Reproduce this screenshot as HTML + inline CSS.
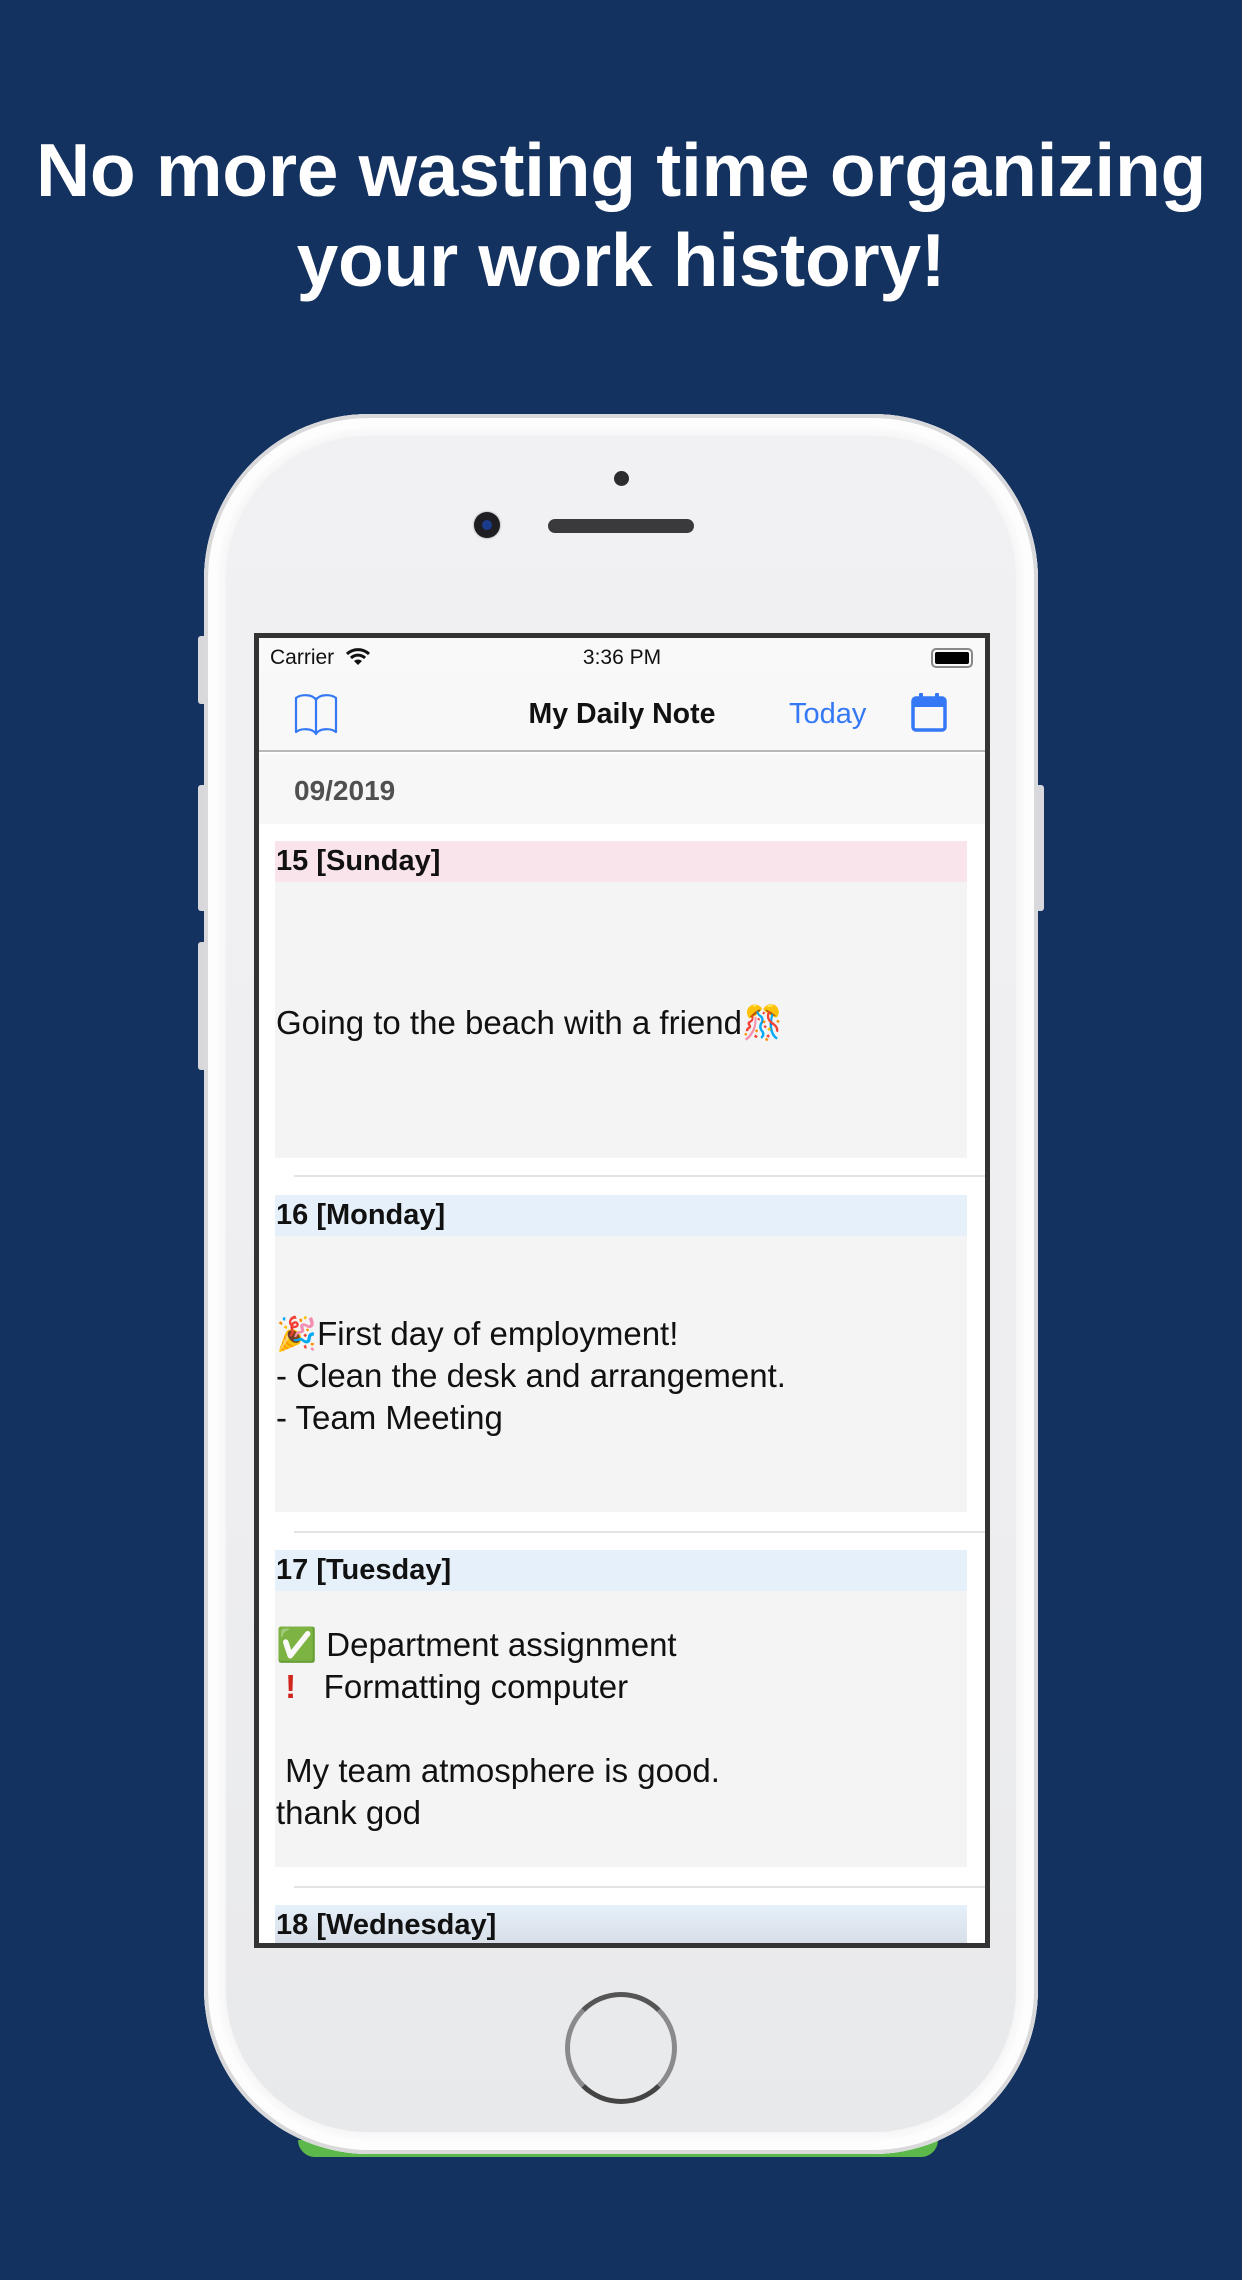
<!DOCTYPE html>
<html><head><meta charset="utf-8"><style>
*{margin:0;padding:0;box-sizing:border-box}
body{width:1242px;height:2280px;background:#13325f;position:relative;overflow:hidden;font-family:"Liberation Sans","DejaVu Sans",sans-serif}
.a{position:absolute}
.t{left:0;width:1242px;text-align:center;color:#fff;font-weight:bold;font-size:75px;letter-spacing:-0.3px;line-height:90px}
.txt{font-size:33px;color:#111;left:276px;line-height:42px;white-space:nowrap}
.hd{left:275px;width:692px;height:41px;font-weight:bold;font-size:29px;line-height:41px;color:#111;padding-left:1px}
.card{left:275px;width:692px;background:#f4f4f4}
.sep{left:294px;width:692px;height:2px;background:#e4e4e4}
</style></head><body>
<div class="a t" style="top:125px">No more wasting time organizing</div>
<div class="a t" style="top:215px">your work history!</div>

<div class="a" style="left:198px;top:636px;width:10px;height:68px;background:#d8d8dc;border-radius:3px"></div>
<div class="a" style="left:198px;top:785px;width:10px;height:126px;background:#d8d8dc;border-radius:3px"></div>
<div class="a" style="left:198px;top:942px;width:10px;height:128px;background:#d8d8dc;border-radius:3px"></div>
<div class="a" style="left:1034px;top:785px;width:10px;height:126px;background:#d8d8dc;border-radius:3px"></div>
<div class="a" style="left:298px;top:2140px;width:640px;height:17px;background:#5cb84a;border-radius:0 0 20px 20px"></div>
<div class="a" style="left:204px;top:414px;width:834px;height:1740px;border-radius:165px;background:#fafafa;box-shadow:inset 0 0 0 4px #d9d9dc,inset 0 0 0 14px #fdfdfd"></div>
<div class="a" style="left:226px;top:436px;width:790px;height:1696px;border-radius:142px;background:linear-gradient(#f1f1f3,#eeeef0 60%,#e8e9eb);box-shadow:0 0 6px 2px #f4f4f6"></div>
<div class="a" style="left:614px;top:471px;width:15px;height:15px;border-radius:50%;background:#2c2c2e"></div>
<div class="a" style="left:474px;top:512px;width:26px;height:26px;border-radius:50%;background:#1d1d22;box-shadow:0 0 2px #888"><div class="a" style="left:8px;top:8px;width:10px;height:10px;border-radius:50%;background:#1b3c8c"></div></div>
<div class="a" style="left:548px;top:519px;width:146px;height:14px;border-radius:7px;background:#3a3a3c"></div>
<div class="a" style="left:565px;top:1992px;width:112px;height:112px;border-radius:50%;border:5px solid #8a8a8c;border-top-color:#555;border-bottom-color:#444;background:#e9eaec"></div>

<div class="a" style="left:254px;top:633px;width:736px;height:1315px;border:5px solid #333;background:#fff;overflow:hidden">
  <div style="position:relative;width:726px;height:1305px">
    <div class="a" style="left:0;top:0;width:726px;height:34px;background:#f9f9f9"></div>
    <div class="a" style="left:11px;top:8px;font-size:21px;color:#111">Carrier</div>
    <svg class="a" style="left:86px;top:10px" width="26" height="18" viewBox="0 0 26 18"><path d="M2 6 A16 16 0 0 1 24 6" stroke="#111" stroke-width="3" fill="none"/><path d="M6 10 A10 10 0 0 1 20 10" stroke="#111" stroke-width="3" fill="none"/><path d="M9 13 L13 17 L17 13 A6 6 0 0 0 9 13Z" fill="#111"/></svg>
    <div class="a" style="left:0;width:726px;text-align:center;top:8px;font-size:21px;color:#111">3:36 PM</div>
    <div class="a" style="left:672px;top:10px;width:42px;height:20px;border:2px solid #888;border-radius:5px;padding:2px"><div style="width:100%;height:100%;background:#000;border-radius:2px"></div></div>
    <div class="a" style="left:0;top:34px;width:726px;height:80px;background:#f8f8f8;border-bottom:2px solid #b8b8b8"></div>
    <svg class="a" style="left:34px;top:54px" width="46" height="46" viewBox="0 0 46 46"><path d="M23 42 V8 C20 2 8 2 3 6 V40 C8 36 20 36 23 42 C26 36 38 36 43 40 V6 C38 2 26 2 23 8" stroke="#3478f6" stroke-width="2.2" fill="none" stroke-linejoin="round"/></svg>
    <div class="a" style="left:0;width:726px;text-align:center;top:60px;font-size:28.5px;font-weight:bold;color:#111">My Daily Note</div>
    <div class="a" style="left:530px;top:60px;font-size:29px;color:#3478f6">Today</div>
    <svg class="a" style="left:652px;top:54px" width="36" height="40" viewBox="0 0 36 40"><rect x="2" y="6" width="32" height="32" rx="3" fill="none" stroke="#3478f6" stroke-width="3.5"/><rect x="2" y="6" width="32" height="9" fill="#3478f6"/><rect x="8" y="1" width="4" height="8" rx="1" fill="#3478f6"/><rect x="24" y="1" width="4" height="8" rx="1" fill="#3478f6"/></svg>
    <div class="a" style="left:0;top:116px;width:726px;height:70px;background:#f7f7f7"></div>
    <div class="a" style="left:35px;top:137px;font-size:28px;color:#333;font-weight:bold;opacity:.85">09/2019</div>

    <div class="a card" style="left:16px;top:203px;height:317px"></div>
    <div class="a hd" style="left:16px;top:203px;background:#f8e4ea">15 [Sunday]</div>
    <div class="a txt" style="left:17px;top:364px">Going to the beach with a friend🎊</div>
    <div class="a sep" style="left:35px;top:537px"></div>
    <div class="a card" style="left:16px;top:557px;height:317px"></div>
    <div class="a hd" style="left:16px;top:557px;background:#e6f0fa">16 [Monday]</div>
    <div class="a txt" style="left:17px;top:675px">🎉First day of employment!<br>- Clean the desk and arrangement.<br>- Team Meeting</div>
    <div class="a sep" style="left:35px;top:893px"></div>
    <div class="a card" style="left:16px;top:912px;height:317px"></div>
    <div class="a hd" style="left:16px;top:912px;background:#e6f0fa">17 [Tuesday]</div>
    <div class="a txt" style="left:17px;top:986px">✅ Department assignment<br><span style="color:#d0251c;font-weight:bold">&nbsp;!</span>&nbsp;&nbsp; Formatting computer<br><br>&nbsp;My team atmosphere is good.<br>thank god</div>
    <div class="a sep" style="left:35px;top:1248px"></div>
    <div class="a hd" style="left:16px;top:1267px;background:linear-gradient(#e6f0fa,#d6dde6)">18 [Wednesday]</div>
  </div>
</div>
</body></html>
